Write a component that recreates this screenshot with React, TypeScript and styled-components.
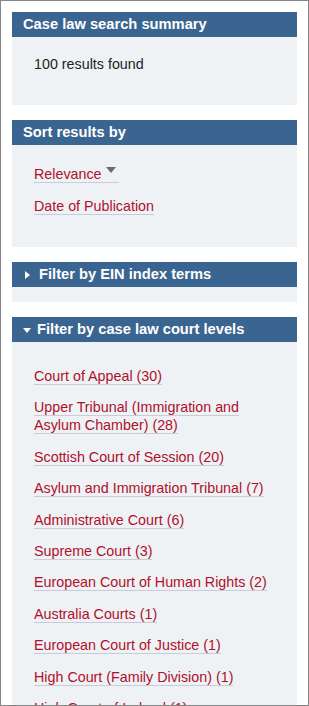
import React from 'react';
import styled, { createGlobalStyle } from 'styled-components';

const GlobalStyle = createGlobalStyle`
  html, body {
    margin: 0;
    padding: 0;
    background: #fff;
  }
  body {
    font-family: "Liberation Sans", Arial, sans-serif;
  }
`;

const Frame = styled.div`
  box-sizing: border-box;
  width: 309px;
  height: 706px;
  border: 1px solid #858585;
  padding: 11px;
  overflow: hidden;
  display: flex;
  flex-direction: column;
  gap: 15px;
  background: #fff;
`;

const Panel = styled.section`
  background: #eef2f5;
  flex-shrink: 0;
`;

const PanelHeader = styled.h2`
  margin: 0;
  height: 25px;
  display: flex;
  align-items: center;
  padding: 0 0 0 11px;
  background: #3b6591;
  color: #fff;
  font-size: 14.7px;
  font-weight: bold;
  line-height: 25px;
  white-space: nowrap;
`;

const Caret = styled.span<{ open: boolean }>`
  display: inline-block;
  width: 0;
  height: 0;
  ${p => p.open ? `
  border-left: 4.5px solid transparent;
  border-right: 4.5px solid transparent;
  border-top: 5px solid #fff;
  margin: 1px 6px 0 0;
  ` : `
  border-top: 4px solid transparent;
  border-bottom: 4px solid transparent;
  border-left: 5px solid #fff;
  margin: 1px 9px 0 2px;
  `}
`;

const PanelBody = styled.div<{ pt: number; pb: number }>`
  padding: ${p => p.pt}px 22px ${p => p.pb}px 22px;
  font-size: 14.3px;
  line-height: 18px;
  color: #222;
`;

const Summary = styled.p`
  margin: 0;
`;

const LinkList = styled.ul<{ gap: number }>`
  list-style: none;
  margin: 0;
  padding: 0;
  display: flex;
  flex-direction: column;
  gap: ${p => p.gap}px;
`;

const Item = styled.li`
  margin: 0;
`;

const Link = styled.a`
  color: #b0102b;
  text-decoration: none;
  border-bottom: 1px solid #c9ccd8;
  cursor: pointer;
`;

const SortArrow = styled.span`
  display: inline-block;
  width: 0;
  height: 0;
  border-left: 5px solid transparent;
  border-right: 5px solid transparent;
  border-top: 6px solid #6b6b6b;
  margin: 0 3px 0 4px;
  vertical-align: 6px;
`;

const courts = [
  'Court of Appeal (30)',
  'Upper Tribunal (Immigration and Asylum Chamber) (28)',
  'Scottish Court of Session (20)',
  'Asylum and Immigration Tribunal (7)',
  'Administrative Court (6)',
  'Supreme Court (3)',
  'European Court of Human Rights (2)',
  'Australia Courts (1)',
  'European Court of Justice (1)',
  'High Court (Family Division) (1)',
  'High Court of Ireland (1)',
  'House of Lords (1)',
];

export default function App() {
  return (
    <>
      <GlobalStyle />
      <Frame>
        <Panel>
          <PanelHeader>Case law search summary</PanelHeader>
          <PanelBody pt={18} pb={32}>
            <Summary>100 results found</Summary>
          </PanelBody>
        </Panel>

        <Panel>
          <PanelHeader>Sort results by</PanelHeader>
          <PanelBody pt={20} pb={32}>
            <LinkList gap={14}>
              <Item>
                <Link>Relevance<SortArrow /></Link>
              </Item>
              <Item>
                <Link>Date of Publication</Link>
              </Item>
            </LinkList>
          </PanelBody>
        </Panel>

        <Panel>
          <PanelHeader><Caret open={false} />Filter by EIN index terms</PanelHeader>
          <PanelBody pt={15} pb={0} />
        </Panel>

        <Panel>
          <PanelHeader><Caret open={true} />Filter by case law court levels</PanelHeader>
          <PanelBody pt={25} pb={20}>
            <LinkList gap={13.4}>
              {courts.map(c => (
                <Item key={c}>
                  <Link>{c}</Link>
                </Item>
              ))}
            </LinkList>
          </PanelBody>
        </Panel>
      </Frame>
    </>
  );
}
